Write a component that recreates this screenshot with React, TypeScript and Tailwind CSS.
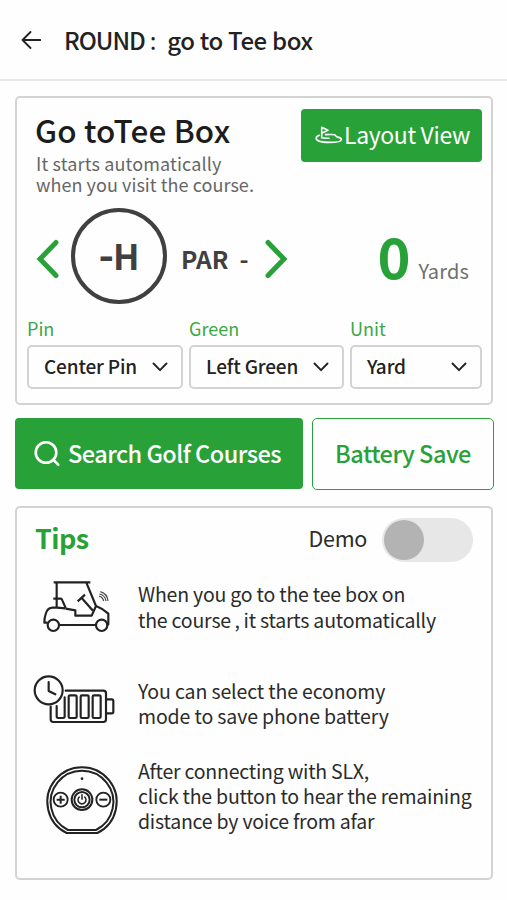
import { useState, type ReactNode } from "react";

interface SelectBoxProps {
    label: string;
    value: string;
    className: string;
}

interface TipProps {
    icon: ReactNode;
    lines: string[];
    className: string;
    textClassName: string;
}

const ChevronIcon = () => (
    <svg className="h-3 w-4 shrink-0" viewBox="0 0 16 12" fill="none" stroke="#222" strokeWidth="1.9" strokeLinecap="round" strokeLinejoin="round">
        <path d="M1.500 2.500 8 9.200l6.500-6.700" />
    </svg>
);

const GolfHoleIcon = () => (
    <svg className="h-5 w-7 shrink-0" viewBox="0 0 28 20" fill="none" stroke="#fff" strokeWidth="1.6" strokeLinejoin="round" strokeLinecap="round">
        <path d="M6.700 12.500V2.200l6.300 3-6 2.800" />
        <path d="M4.300 10.300C2.400 11 1.200 12 1.200 13.200c0 2.400 5 4.200 12.800 4.200 7.200 0 12.400-1 12.400-3 0-1.600-2.600-2-4.400-2.500-1.800-.5-.6-1.800-2.600-2.200-2-.4-5.800 0-9-.1" />
        <path d="M6.700 12.800c2 .6 4.300.5 7.300.4" />
    </svg>
);

const CartIcon = () => (
    <svg className="h-[75px] w-[100px]" viewBox="0 0 300 225" fill="none" stroke="#222" strokeWidth="6.500" strokeLinejoin="round">
        <path d="M71 37h110M80 37v74M169 38l29 70-13 29h-49v-16l-29-5" />
        <path d="M70 86h22q3 0 5 5l10 23M143 94l22-20M155 84l34 38" />
        <path d="M107 115 80 113H68c-12 0-17 7-20 16-4 11-5 21-5 29h10M198 108c14 5 25 12 37 23v32h-5M89 165h108" />
        <circle cx="70" cy="166" r="17" />
        <circle cx="215" cy="166" r="17" />
        <path d="M207 79q11 1 14 14M208 72q17 3 20 21M211 65q21 6 23 28" stroke="#444" strokeWidth="3.500" />
    </svg>
);

const BatteryIcon = () => (
    <svg className="h-[70px] w-[100px]" viewBox="15 0 300 210" fill="none" stroke="#222" strokeWidth="6.500" strokeLinejoin="round" strokeLinecap="round">
        <circle cx="71" cy="76" r="42" />
        <path d="M71 51v27l20 10" />
        <path d="M122 77h113q8 0 8 8v78q0 8-8 8H85q-8 0-8-8v-38" />
        <path d="M246 103h14q5 0 5 5v32q0 5-5 5h-14" />
        <path d="M119 97v57q0 5-5 5h-14q-5 0-5-5v-31" />
        <rect x="131" y="91" width="24" height="68" rx="4" />
        <rect x="167" y="91" width="24" height="68" rx="4" />
        <rect x="203" y="91" width="24" height="68" rx="4" />
    </svg>
);

const RemoteIcon = () => (
    <svg className="h-[90px] w-[100px]" viewBox="-15 0 300 270" fill="none" stroke="#222" strokeWidth="6">
        <path d="M95 234A104 104 0 1 1 187 234Z" strokeWidth="6" />
        <path d="M99 225A94 94 0 1 1 183 225Z" strokeWidth="6" />
        <circle cx="141" cy="71" r="4" fill="#222" stroke="none" />
        <circle cx="77" cy="134" r="21" strokeWidth="5.500" />
        <path d="M65 134h24M77 122v24" />
        <circle cx="205" cy="134" r="21" strokeWidth="5.500" />
        <path d="M193 134h24" />
        <circle cx="141" cy="134" r="31" strokeWidth="6" />
        <circle cx="141" cy="134" r="23" strokeWidth="6" />
        <path d="M134 125a12 12 0 1 0 14 0M141 118v16" strokeWidth="4.500" />
    </svg>
);

const SelectBox = ({ label, value, className }: SelectBoxProps) => (
    <div className={className}>
        <div className="h-[29px] text-[18px] leading-[24px] text-[#3aa845]">{label}</div>
        <button className="flex h-[44px] w-full items-center justify-between rounded-[5px] border-2 border-[#d3d3d3] pr-[13px] pl-[15px] text-[19px] font-medium tracking-[-0.15px] text-[#222]">
            <span className="relative -top-px whitespace-nowrap">{value}</span>
            <ChevronIcon />
        </button>
    </div>
);

const Tip = ({ icon, lines, className, textClassName }: TipProps) => (
    <div className={`flex items-start ${className}`}>
        <div className="w-[108px] shrink-0">{icon}</div>
        <p className={`text-[19.5px] whitespace-nowrap text-[#2b2b2b] ${textClassName}`}>
            {lines.map((line) => (
                <span key={line} className="block">
                    {line}
                </span>
            ))}
        </p>
    </div>
);

export default function App() {
    const [demo, setDemo] = useState(false);

    return (
        <div className="h-[900px] w-[507px] overflow-hidden bg-[#fefefe] font-['Noto_Sans_CJK_KR','Noto_Sans',sans-serif]">
            {/* header */}
            <header className="flex h-[81px] items-center border-b-2 border-[#e8e8e8] pl-[21px]">
                <svg className="h-5 w-5" viewBox="0 0 20 20" fill="none" stroke="#222" strokeWidth="1.8" strokeLinecap="round" strokeLinejoin="round">
                    <path d="M19.300 10H1.500M9.500 2 1.500 10l8 8" />
                </svg>
                <h1 className="ml-[23px] flex text-[24px] font-medium tracking-[-0.35px] text-[#222]">
                    <span className="tracking-[-1px]">ROUND</span>
                    <span className="ml-[5px] font-normal">:</span>
                    <span className="ml-[11px]">go to Tee box</span>
                </h1>
            </header>

            <main className="px-[15px] pt-[15px]">
                {/* current hole */}
                <section className="h-[309px] w-[478px] rounded-[5px] border-2 border-[#d3d3d3]">
                    <div className="flex h-[110px] justify-between pt-[11px] pr-[9px] pl-[18px]">
                        <div className="whitespace-nowrap">
                            <h2 className="text-[31.5px] leading-[40px] font-medium tracking-[0.15px] text-[#1c1c1c]">Go toTee Box</h2>
                            <p className="mt-1 ml-px text-[18px] leading-[21px] text-[#666]">
                                <span className="tracking-[0.15px]">It starts automatically</span>
                                <br />
                                <span className="tracking-[0.05px]">when you visit the course.</span>
                            </p>
                        </div>
                        <button className="flex h-[53px] w-[181px] items-center rounded-[4px] bg-[#28a138] pb-0.5 pl-[14px] text-[23px] tracking-[-0.35px] whitespace-nowrap text-white">
                            <GolfHoleIcon />
                            <span className="ml-px">Layout View</span>
                        </button>
                    </div>

                    <div className="flex h-[96px] items-center pl-[19px]">
                        <svg className="mt-[6px] h-10 w-6" viewBox="0 0 24 40" fill="none" stroke="#28a138" strokeWidth="5" strokeLinecap="round">
                            <path d="M20 3.500 4 20l16 16.500" />
                        </svg>
                        <div className="ml-[11px] flex h-[96px] w-[96px] items-center justify-center rounded-full border-4 border-[#404040] pb-0.5 text-[35px] font-bold text-[#404040]">
                            <span className="relative -top-[2px] text-[42px] leading-none">-</span>
                            <span className="-ml-px">H</span>
                        </div>
                        <span className="mt-[7px] ml-[14px] text-[24.5px] font-bold whitespace-pre text-[#404040]">PAR  -</span>
                        <svg className="mt-[6px] ml-[15px] h-10 w-6" viewBox="0 0 24 40" fill="none" stroke="#28a138" strokeWidth="5" strokeLinecap="round">
                            <path d="M4 3.500 20 20 4 36.500" />
                        </svg>
                        <div className="ml-auto flex items-baseline pr-[22px] pb-0.5">
                            <span className="text-[56px] leading-[60px] font-bold text-[#28a138]">0</span>
                            <span className="ml-[8px] text-[20px] leading-[30px] tracking-[0.15px] text-[#707070]">Yards</span>
                        </div>
                    </div>

                    <div className="flex gap-[6px] pt-[12px] pl-[10px]">
                        <SelectBox label="Pin" value="Center Pin" className="w-[156px]" />
                        <SelectBox label="Green" value="Left Green" className="w-[155px]" />
                        <SelectBox label="Unit" value="Yard" className="w-[132px]" />
                    </div>
                </section>

                {/* actions */}
                <div className="mt-[13px] flex w-[479px] gap-[9px]">
                    <button className="flex h-[71px] w-[288px] items-center rounded-[4px] bg-[#28a138] pl-[19px] text-[23.5px] font-medium tracking-[-0.53px] whitespace-nowrap text-white">
                        <svg className="mr-[6px] h-7 w-7 shrink-0" viewBox="0 0 28 28" fill="none" stroke="#fff" strokeWidth="2.600" strokeLinecap="round">
                            <circle cx="12" cy="12.500" r="10.300" />
                            <path d="m19.500 19.800 4.700 4.900" />
                        </svg>
                        <span>Search Golf Courses</span>
                    </button>
                    <button className="flex h-[72px] w-[182px] items-center justify-center rounded-[5px] border-[1.5px] border-[#28a138] text-[23.5px] font-medium tracking-[-0.5px] whitespace-nowrap text-[#28a138]">
                        Battery Save
                    </button>
                </div>

                {/* tips */}
                <section className="mt-[16px] h-[374px] w-[478px] rounded-[5px] border-2 border-[#d3d3d3]">
                    <div className="flex h-[64px] items-center pr-[18px] pl-[18px]">
                        <h2 className="mb-1 text-[27px] font-bold tracking-[-0.5px] text-[#28a138]">Tips</h2>
                        <span className="mb-1 ml-auto text-[21.5px] tracking-[-0.3px] text-[#2b2b2b]">Demo</span>
                        <button
                            className={`ml-[15px] flex h-[44px] w-[91px] items-center rounded-full bg-[#e7e7e7] px-[2px] ${demo ? "justify-end" : "justify-start"}`}
                            onClick={() => setDemo(!demo)}
                        >
                            <span className="h-10 w-10 rounded-full bg-[#b3b3b3]" />
                        </button>
                    </div>
                    <div className="-mt-0.5 pl-[13px]">
                        <Tip
                            className="h-[95px]"
                            textClassName="pt-[11px] leading-[25.5px] tracking-[-0.2px]"
                            icon={<CartIcon />}
                            lines={["When you go to the tee box on", "the course\u2009,\u2009it starts automatically"]}
                        />
                        <Tip
                            className="h-[90px]"
                            textClassName="pt-[13px] leading-[25px] tracking-[-0.13px]"
                            icon={<BatteryIcon />}
                            lines={["You can select the economy", "mode to save phone battery"]}
                        />
                        <Tip
                            className="h-[90px]"
                            textClassName="pt-[3px] leading-[25px] tracking-[-0.22px]"
                            icon={<RemoteIcon />}
                            lines={["After connecting with SLX,", "click the button to hear the remaining", "distance by voice from afar"]}
                        />
                    </div>
                </section>
            </main>
        </div>
    );
}
